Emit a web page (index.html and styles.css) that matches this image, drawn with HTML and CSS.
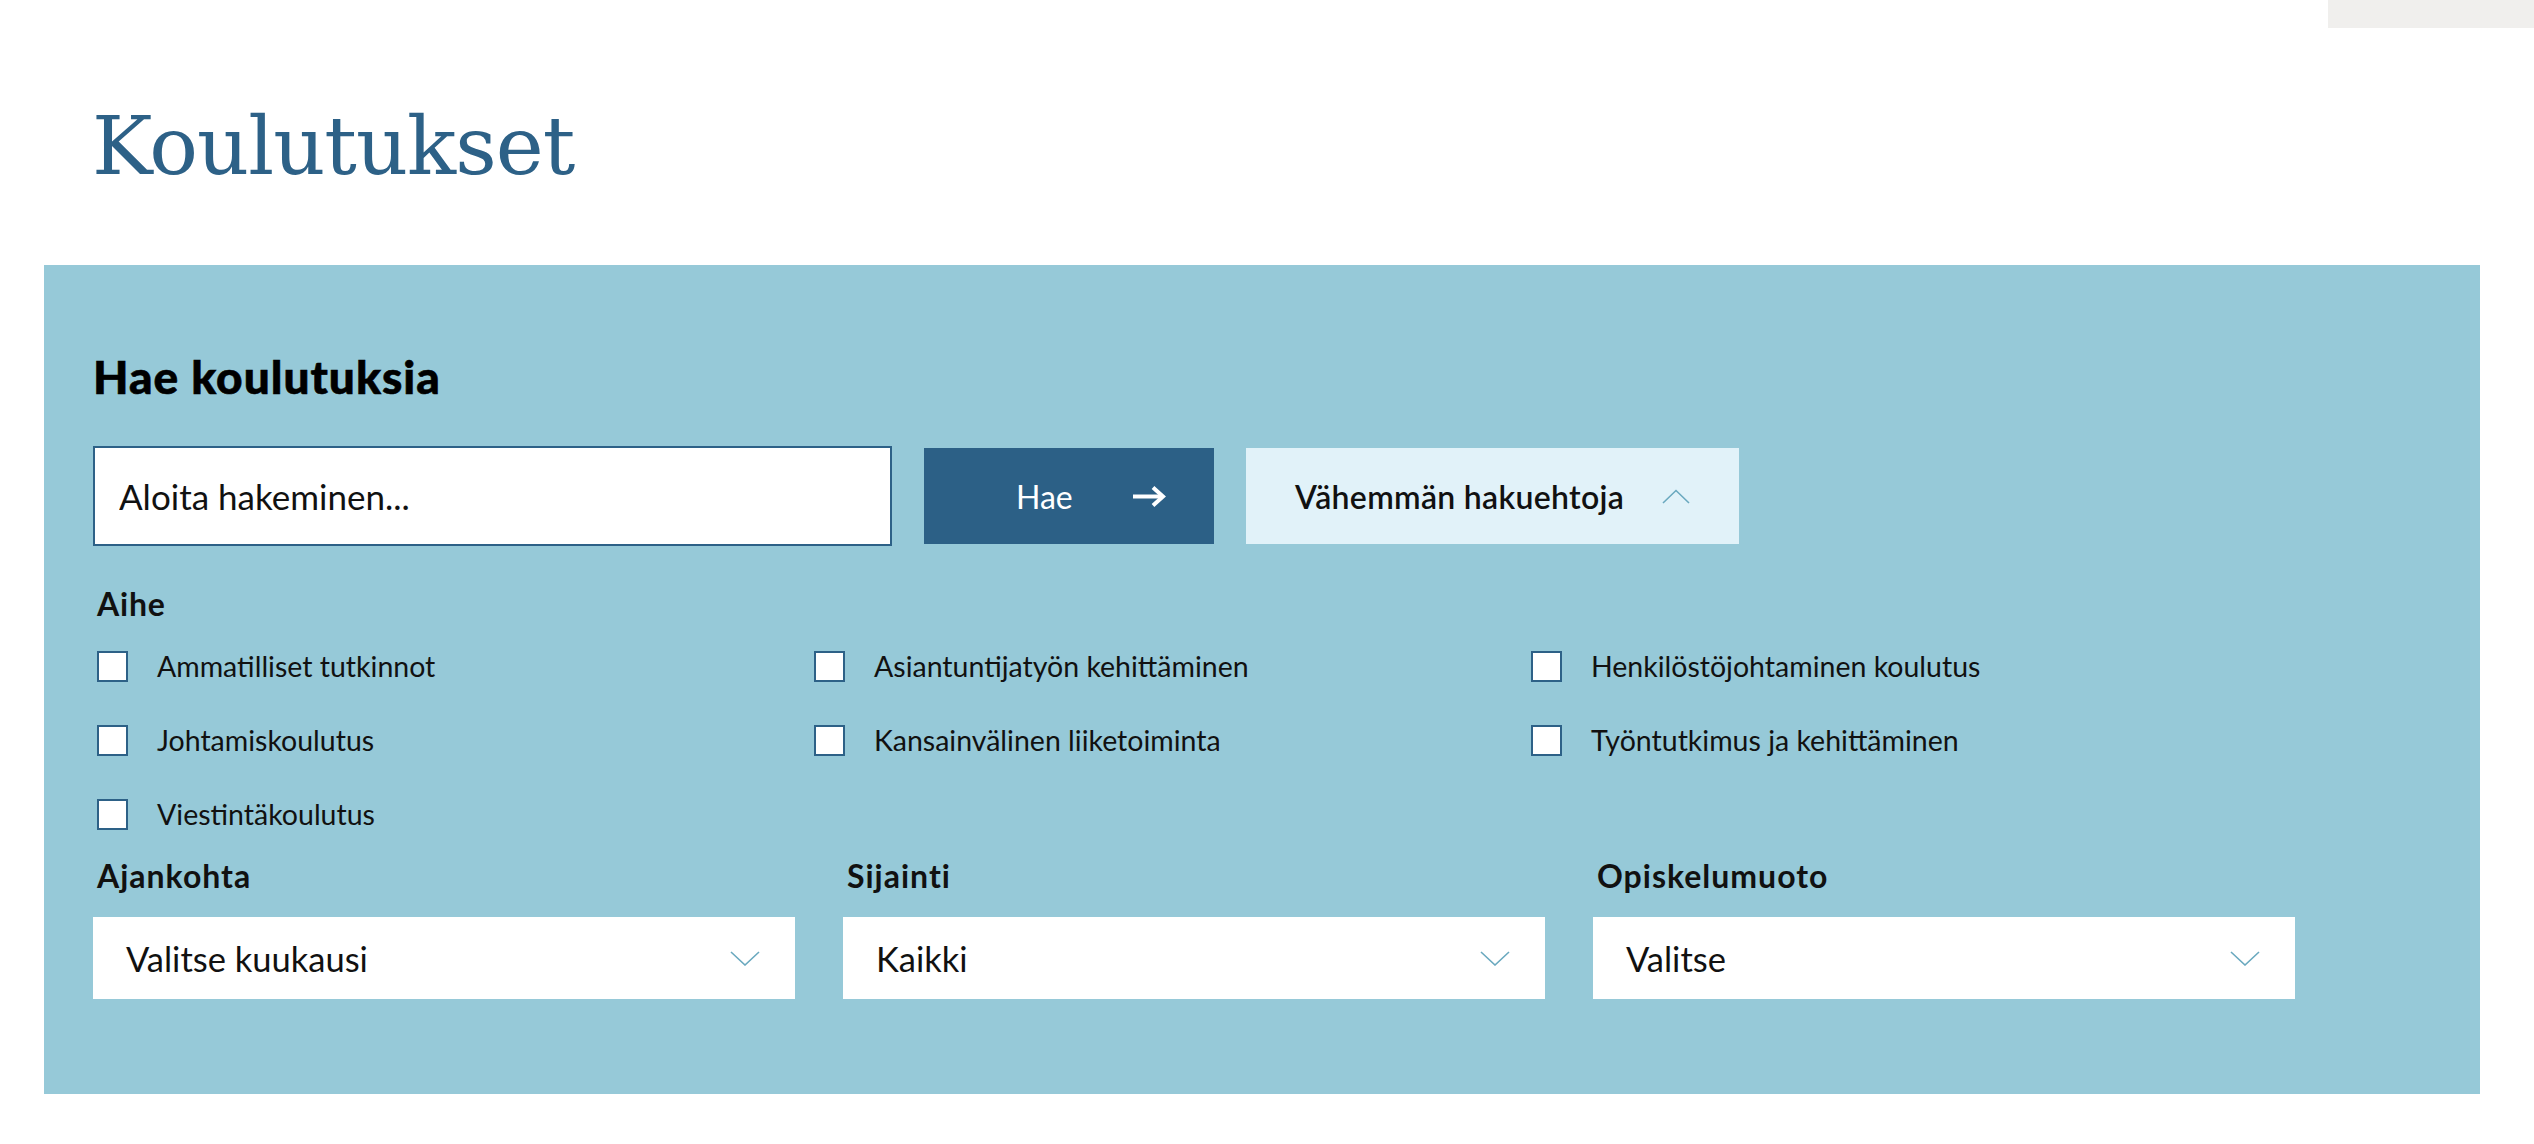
FILE: index.html
```html
<!DOCTYPE html>
<html lang="fi">
<head>
  <meta charset="UTF-8" />
  <title>Koulutukset</title>
  <link rel="stylesheet" href="styles.css">
</head>
<body>

<header class="topbar">
  <div class="topbar-tab"></div>
</header>

<main class="page">
  <h1 class="page-title">Koulutukset</h1>

  <section class="search">
    <h2>Hae koulutuksia</h2>

    <form class="search-row" onsubmit="return false">
      <input class="search-input" type="text" placeholder="Aloita hakeminen...">
      <button class="btn-search" type="submit">
        <span>Hae</span>
        <svg width="33" height="21" viewBox="0 0 33 21" fill="none" stroke="#fff" stroke-width="4">
          <path d="M0 10.5h30"/>
          <path d="M20 1.5l10 9-10 9"/>
        </svg>
      </button>
      <button class="btn-toggle" type="button">
        <span>Vähemmän hakuehtoja</span>
        <svg width="28" height="15" viewBox="0 0 28 15" fill="none" stroke="#6aa9bf" stroke-width="1.6">
          <path d="M1 14L14 1.5 27 14"/>
        </svg>
      </button>
    </form>

    <h3 class="group-title">Aihe</h3>
    <div class="checks">
      <label class="check"><input type="checkbox">Ammatilliset tutkinnot</label>
      <label class="check"><input type="checkbox">Asiantuntijatyön kehittäminen</label>
      <label class="check"><input type="checkbox">Henkilöstöjohtaminen koulutus</label>
      <label class="check"><input type="checkbox">Johtamiskoulutus</label>
      <label class="check"><input type="checkbox">Kansainvälinen liiketoiminta</label>
      <label class="check"><input type="checkbox">Työntutkimus ja kehittäminen</label>
      <label class="check"><input type="checkbox">Viestintäkoulutus</label>
    </div>

    <div class="filters">
      <div class="filter">
        <div class="filter-label">Ajankohta</div>
        <button class="select" type="button">
          <span>Valitse kuukausi</span>
          <svg width="30" height="15" viewBox="0 0 30 15" fill="none" stroke="#6aa9bf" stroke-width="1.6"><path d="M1 1l14 13L29 1"/></svg>
        </button>
      </div>
      <div class="filter">
        <div class="filter-label">Sijainti</div>
        <button class="select" type="button">
          <span>Kaikki</span>
          <svg width="30" height="15" viewBox="0 0 30 15" fill="none" stroke="#6aa9bf" stroke-width="1.6"><path d="M1 1l14 13L29 1"/></svg>
        </button>
      </div>
      <div class="filter">
        <div class="filter-label">Opiskelumuoto</div>
        <button class="select" type="button">
          <span>Valitse</span>
          <svg width="30" height="15" viewBox="0 0 30 15" fill="none" stroke="#6aa9bf" stroke-width="1.6"><path d="M1 1l14 13L29 1"/></svg>
        </button>
      </div>
    </div>
  </section>
</main>

</body>
</html>
```

FILE: styles.css
```css
body {
  margin: 0;
  background: #fff;
  font-family: Lato, 'Open Sans', sans-serif;
  color: #111;
}
.topbar {
  display: flex;
  justify-content: flex-end;
  height: 28px;
}
.topbar-tab {
  width: 206px;
  background: #f0efed;
}
.page {
  width: 2436px;
  margin-left: 44px;
}
.page-title {
  margin: 78px 0 78px;
  padding-left: 48px;
  font-family: 'DejaVu Serif', serif;
  font-weight: normal;
  font-size: 81px;
  line-height: 81px;
  letter-spacing: -1px;
  color: #2d6187;
}
.search {
  background: #96c9d8;
  padding: 86px 49px 95px;
}
.search h2 {
  margin: 0 0 43px;
  font-size: 46px;
  line-height: 52px;
  font-weight: 900;
  letter-spacing: 1px;
  -webkit-text-stroke: 0.6px #000;
  color: #000;
}
.search-row {
  display: flex;
  align-items: center;
  gap: 32px;
  margin: 0;
}
.search-input {
  box-sizing: border-box;
  width: 799px;
  height: 100px;
  border: 2px solid #2d6187;
  border-radius: 0;
  padding: 0 24px;
  font-family: Lato, sans-serif;
  font-size: 35px;
  color: #111;
  background: #fff;
  outline: none;
}
.search-input::placeholder {
  color: #111;
}
.btn-search,
.btn-toggle {
  display: flex;
  align-items: center;
  height: 96px;
  border: none;
  border-radius: 0;
  font-family: Lato, sans-serif;
  font-size: 32px;
  cursor: pointer;
}
.btn-search {
  width: 290px;
  padding: 0 0 0 92px;
  gap: 60px;
  background: #2c6086;
  color: #fff;
}
.btn-toggle {
  width: 493px;
  padding: 0 0 0 49px;
  gap: 38px;
  background: #e1f2f9;
  color: #111;
  font-weight: 600;
  letter-spacing: 0.3px;
}
.group-title {
  margin: 39px 0 28px 4px;
  font-size: 32px;
  line-height: 38px;
  font-weight: 700;
  letter-spacing: 0.8px;
}
.checks {
  display: grid;
  grid-template-columns: repeat(3, 717px);
  row-gap: 43px;
  margin-left: 4px;
}
.check {
  display: flex;
  align-items: center;
  gap: 29px;
  font-size: 28.5px;
  line-height: 31px;
  cursor: pointer;
}
.check input {
  appearance: none;
  -webkit-appearance: none;
  box-sizing: border-box;
  width: 31px;
  height: 31px;
  margin: 0;
  border: 2px solid #2d6187;
  background: #fff;
}
.filters {
  display: grid;
  grid-template-columns: repeat(3, 702px);
  column-gap: 48px;
  margin-top: 27px;
}
.filter-label {
  padding-left: 4px;
  margin-bottom: 22px;
  font-size: 32px;
  line-height: 38px;
  font-weight: 700;
  letter-spacing: 1px;
}
.select {
  box-sizing: border-box;
  display: flex;
  align-items: center;
  justify-content: space-between;
  width: 100%;
  height: 82px;
  padding: 0 35px 0 33px;
  border: none;
  border-radius: 0;
  background: #fff;
  font-family: Lato, sans-serif;
  font-size: 34.5px;
  color: #111;
  cursor: pointer;
}
```
